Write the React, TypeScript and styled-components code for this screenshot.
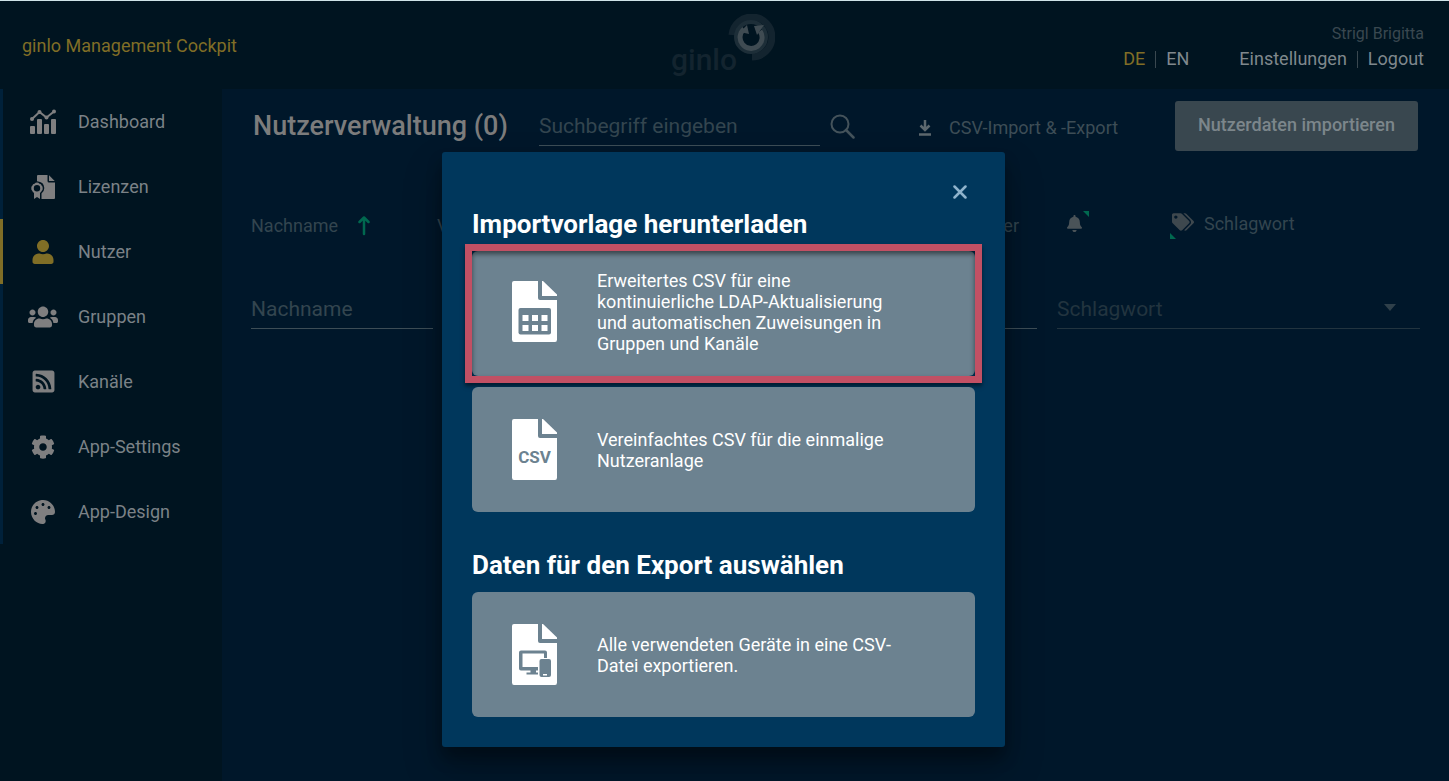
import React from "react";
import styled, { createGlobalStyle, css } from "styled-components";
import { FaUser, FaUsers, FaRssSquare, FaCog, FaPalette, FaBell, FaTags } from "react-icons/fa";

const color = {
  frame: "#001420",
  main: "#00172a",
  rail: "#00213a",
  gold: "#806e26",
  navText: "#7b8287",
  icon: "#7f7f80",
  title: "#7c7c7c",
  muted: "#33454f",
  line: "#3d4d56",
  green: "#00684f",
  modal: "#00375c",
  card: "#6c8290",
  mark: "#c25064",
};

const Global = createGlobalStyle`
  * { box-sizing: border-box; }
  body {
    margin: 0;
    background: ${color.main};
    font-family: Roboto, "Liberation Sans", sans-serif;
    font-size: 18px;
    line-height: 22px;
  }
  button, input, select { font: inherit; color: inherit; }
`;

const Page = styled.div`
  min-height: 100vh;
  display: flex;
  flex-direction: column;
  background: ${color.frame};
`;

const Header = styled.header`
  display: grid;
  grid-template-columns: 1fr auto 1fr;
  height: 89px;
  padding: 0 25px 0 22px;
  border-top: 1px solid #cfe3e8;
`;

const Brand = styled.div`
  align-self: center;
  padding-top: 2px;
  color: ${color.gold};
`;

const Logo = styled.div`
  display: flex;
  align-items: flex-end;
  padding-bottom: 13px;
`;

const LogoName = styled.span`
  color: #13242f;
  font-size: 30px;
  font-weight: 500;
  line-height: 32px;
`;

const LogoMark = styled.svg`
  width: 48px;
  height: 48px;
  margin: 0 0 14px -10px;
`;

const Account = styled.div`
  display: flex;
  flex-direction: column;
  align-items: flex-end;
  padding-top: 22px;
`;

const UserName = styled.div`
  color: #3a4850;
  font-size: 16px;
`;

const AccountRow = styled.div`
  display: flex;
  gap: 50px;
  padding-top: 3px;
`;

const LinkPair = styled.nav`
  display: flex;
  align-items: center;
  gap: 10px;
`;

const HeaderLink = styled.a<{ $active?: boolean }>`
  color: ${(p) => (p.$active ? color.gold : "#7f888d")};
  text-decoration: none;
`;

const Divider = styled.span`
  width: 1px;
  height: 17px;
  background: #3a4850;
`;

const Body = styled.div`
  flex: 1;
  display: flex;
`;

const Sidebar = styled.nav`
  flex: 0 0 222px;
`;

const NavItem = styled.a<{ $active?: boolean }>`
  display: grid;
  grid-template-columns: 30px 1fr;
  align-items: center;
  gap: 20px;
  height: 65px;
  padding-left: 25px;
  border-left: 3px solid ${(p) => (p.$active ? color.gold : color.rail)};
  color: ${color.navText};
  text-decoration: none;

  svg {
    justify-self: center;
    color: ${(p) => (p.$active ? color.gold : color.icon)};
  }
`;

const Main = styled.main`
  flex: 1;
  min-width: 0;
  padding: 12px 29px 0;
  background: ${color.main};
  color: ${color.muted};
`;

const Toolbar = styled.div`
  display: flex;
  align-items: center;
  height: 50px;
  padding: 0 2px;
`;

const PageTitle = styled.h1`
  margin: 0;
  width: 286px;
  color: ${color.title};
  font-size: 27px;
  font-weight: 500;
  line-height: 32px;
`;

const fieldStyle = css`
  width: 100%;
  height: 40px;
  padding: 0;
  border: 0;
  border-bottom: 1px solid ${color.line};
  border-radius: 0;
  outline: 0;
  background: transparent;
  color: ${color.muted};
  font-size: 21px;

  &::placeholder {
    color: inherit;
    opacity: 1;
  }
`;

const SearchForm = styled.form`
  display: flex;
  align-items: center;
  gap: 10px;
`;

const SearchInput = styled.input`
  ${fieldStyle}
  width: 281px;
`;

const IconButton = styled.button`
  display: grid;
  place-items: center;
  padding: 0;
  border: 0;
  background: transparent;
  cursor: pointer;
`;

const CsvButton = styled(IconButton)`
  grid-template-columns: 16px auto;
  gap: 16px;
  margin-left: 62px;
  padding-top: 4px;
  color: #3d4d56;
`;

const ImportButton = styled.button`
  width: 243px;
  height: 50px;
  margin-left: auto;
  padding: 0 0 2px;
  border: 0;
  border-radius: 3px;
  background: #39474f;
  color: #7c868b;
  font-weight: 500;
  cursor: pointer;
`;

const ColumnRow = styled.div`
  display: grid;
  grid-template-columns: 186fr 629fr 102fr 252fr;
  align-items: center;
  height: 28px;
  margin-top: 60px;
`;

const Column = styled.div`
  display: flex;
  align-items: center;
  gap: 20px;
`;

const WideColumn = styled(Column)`
  justify-content: space-between;
  padding-right: 47px;
`;

const Flag = styled.span<{ $corner: "top" | "bottom" }>`
  position: relative;
  display: flex;
  padding-bottom: 4px;

  &::after {
    content: "";
    position: absolute;
    width: 6px;
    height: 6px;
    background: ${color.green};
    ${(p) =>
      p.$corner === "top"
        ? "top: -4px; right: -6px; clip-path: polygon(0 0, 100% 0, 100% 100%);"
        : "bottom: -2px; left: -2px; clip-path: polygon(0 0, 100% 100%, 0 100%);"}
  }
`;

const TagColumn = styled(Column)`
  gap: 10px;
  padding: 0 0 3px 4px;
`;

const Filters = styled.form`
  display: grid;
  grid-template-columns: repeat(4, 1fr) 2fr;
  gap: 20px;
  padding-top: 50px;
`;

const FilterInput = styled.input`
  ${fieldStyle}
`;

const SelectBox = styled.div`
  position: relative;
  color: #2f404a;
`;

const FilterSelect = styled.select`
  ${fieldStyle}
  appearance: none;
  border-color: #22343f;
  color: #22343f;
`;

const Caret = styled.svg`
  position: absolute;
  right: 24px;
  top: 15px;
  pointer-events: none;
`;

const Overlay = styled.div`
  position: absolute;
  inset: 0;
  display: flex;
  justify-content: center;
  align-items: flex-start;
  padding: 152px 22px 34px 20px;
`;

const Modal = styled.section`
  width: 563px;
  padding: 30px;
  border-radius: 3px;
  background: ${color.modal};
  color: #ffffff;
  box-shadow: 0 11px 15px rgba(0, 0, 0, 0.3), 0 20px 38px rgba(0, 0, 0, 0.25);
`;

const ModalTop = styled.div`
  display: flex;
  justify-content: flex-end;
  height: 26px;
  padding-right: 4px;
`;

const CloseButton = styled(IconButton)`
  width: 22px;
  height: 20px;
  color: #8fb3cc;
`;

const ModalTitle = styled.h2`
  margin: 0;
  font-size: 26px;
  font-weight: 700;
  line-height: 32px;
`;

const CardList = styled.div`
  display: grid;
  gap: 11px;
  padding-top: 11px;

  & + ${ModalTitle} {
    margin-top: 37px;
  }
`;

const Card = styled.button<{ $marked?: boolean }>`
  position: relative;
  display: grid;
  grid-template-columns: 45px 1fr;
  align-items: center;
  gap: 40px;
  height: 125px;
  padding: 0 72px 0 40px;
  border: 0;
  border-radius: 6px;
  background: ${color.card};
  color: #ffffff;
  line-height: 21px;
  text-align: left;
  cursor: pointer;

  ${(p) =>
    p.$marked &&
    css`
      padding-bottom: 4px;

      &::after {
        content: "";
        position: absolute;
        inset: -7px;
        border: 7px solid ${color.mark};
        box-shadow: 0 3px 4px rgba(0, 0, 0, 0.5), inset 0 3px 5px rgba(0, 0, 0, 0.5);
      }
    `}
`;

const DashboardIcon = () => (
  <svg width="28" height="26" viewBox="0 0 28 26" fill="currentColor" aria-hidden="true">
    <rect x="1" y="17" width="5" height="8" rx="1" />
    <rect x="8" y="10" width="5" height="15" rx="1" />
    <rect x="15" y="15" width="5" height="10" rx="1" />
    <rect x="22" y="10" width="5" height="15" rx="1" />
    <path d="M3 10 L10.500 3 L17.500 8.500 L25 2.500" fill="none" stroke="currentColor" strokeWidth="2" />
    <circle cx="3" cy="10" r="2" />
    <circle cx="10.500" cy="3" r="2" />
    <circle cx="17.500" cy="8.500" r="2" />
    <circle cx="25" cy="2.500" r="2" />
  </svg>
);

const LicenceIcon = () => (
  <svg width="24" height="24" viewBox="0 0 24 24" fill="currentColor" aria-hidden="true">
    <path d="M6 1 Q6 0 7 0 H16.500 V6 Q16.500 7.500 18 7.500 H24 V23 Q24 24 23 24 H10.500 V18.500 Q13.300 16.500 13.300 13 Q13.300 7 6 6.200 Z" />
    <path d="M18 0.300 L23.700 6 H18 Z" />
    <path
      fillRule="evenodd"
      d="M6 7.500 Q7.500 7.500 8.500 8.700 Q10.200 8.900 10.600 10.500 Q12 11.500 11.700 13.200 Q12 15 10.600 15.900 Q10.200 17.400 9 17.700 V24 L6 22 L3 24 V17.700 Q1.700 17.300 1.400 15.900 Q0 14.800 0.300 13.200 Q0 11.500 1.400 10.500 Q1.800 8.900 3.500 8.700 Q4.500 7.500 6 7.500 Z M6 10 A3.200 3.200 0 1 0 6 16.400 A3.200 3.200 0 1 0 6 10 Z"
    />
  </svg>
);

const SearchIcon = () => (
  <svg width="25" height="25" viewBox="0 0 25 25" fill="none" stroke="#44535b" strokeWidth="2" aria-hidden="true">
    <circle cx="10" cy="10" r="8.500" />
    <path d="M16 16 L23.500 23.500" strokeWidth="2.500" strokeLinecap="round" />
  </svg>
);

const DownloadIcon = () => (
  <svg width="14" height="16" viewBox="0 0 14 16" fill="none" stroke="#5d686e" strokeWidth="2.500" aria-hidden="true">
    <path d="M7 0 V10 M2.500 5.500 L7 10 L11.500 5.500 M1 14.500 H13" />
  </svg>
);

const ArrowUpIcon = () => (
  <svg width="12" height="20" viewBox="0 0 12 20" fill="none" stroke={color.green} strokeWidth="2.500" strokeLinecap="round" strokeLinejoin="round" aria-hidden="true">
    <path d="M6 18 V2 M1.500 6 L6 1.500 L10.500 6" />
  </svg>
);

const CloseIcon = () => (
  <svg width="14" height="14" viewBox="0 0 14 14" stroke="currentColor" strokeWidth="2.500" strokeLinecap="round" aria-hidden="true">
    <path d="M1.500 1.500 L12.500 12.500 M12.500 1.500 L1.500 12.500" />
  </svg>
);

const FileIcon = ({ children }: { children: React.ReactNode }) => (
  <svg width="45" height="61" viewBox="0 0 45 61" fill="#ffffff" aria-hidden="true">
    <path d="M2 0 H26 V17 Q26 19 28 19 H45 V58.500 Q45 61 43 61 H2 Q0 61 0 58.500 V2 Q0 0 2 0 Z" />
    <path d="M30 0 H31 L45 13.500 V15 H30 Z" />
    {children}
  </svg>
);

const TableFileIcon = () => (
  <FileIcon>
    <rect x="6.500" y="27" width="32.500" height="26.500" rx="2" fill={color.card} />
    {[34, 44].map((y) => [10.5, 20, 29.5].map((x) => <rect key={`${x}-${y}`} x={x} y={y} width="6" height="6" />))}
  </FileIcon>
);

const CsvFileIcon = () => (
  <FileIcon>
    <text x="22.500" y="44" textAnchor="middle" fontSize="17" fontWeight="700" fill={color.card}>
      CSV
    </text>
  </FileIcon>
);

const DeviceFileIcon = () => (
  <FileIcon>
    <path
      fill={color.card}
      fillRule="evenodd"
      d="M9 26.500 H33 Q35 26.500 35 28.500 V34 H32 V29.500 H10.500 V43 H26 V46.500 H24 V48.500 H26 V50.500 H14.500 V48.500 H18.500 V46.500 H9 Q7 46.500 7 44.500 V28.500 Q7 26.500 9 26.500 Z"
    />
    <rect x="27.500" y="35" width="11.500" height="18" rx="2" fill={color.card} />
    <rect x="31" y="50" width="4" height="1.500" />
  </FileIcon>
);

const navigation = [
  { label: "Dashboard", icon: <DashboardIcon /> },
  { label: "Lizenzen", icon: <LicenceIcon /> },
  { label: "Nutzer", icon: <FaUser size={24} />, active: true },
  { label: "Gruppen", icon: <FaUsers size={30} /> },
  { label: "Kanäle", icon: <FaRssSquare size={25} /> },
  { label: "App-Settings", icon: <FaCog size={24} /> },
  { label: "App-Design", icon: <FaPalette size={24} /> },
];

export default function App() {
  return (
    <Page>
      <Global />
      <Header>
        <Brand>ginlo Management Cockpit</Brand>
        <Logo>
          <LogoName>ginlo</LogoName>
          <LogoMark viewBox="0 0 48 48" fill="none" aria-hidden="true">
            <path d="M5 21 A20 20 0 1 1 25 43" stroke="#13242f" strokeWidth="7" />
            <circle cx="24" cy="23" r="15" stroke="#1d2e38" strokeWidth="4" />
            <path d="M17 15 A11 11 0 1 0 33 17" stroke="#3f4b52" strokeWidth="5" />
            <path d="M13 18 L20 11 L22 20 Z M27 12 L37 11 L30 21 Z" fill="#3f4b52" />
          </LogoMark>
        </Logo>
        <Account>
          <UserName>Strigl Brigitta</UserName>
          <AccountRow>
            <LinkPair aria-label="Sprache">
              <HeaderLink href="#de" $active>DE</HeaderLink>
              <Divider />
              <HeaderLink href="#en">EN</HeaderLink>
            </LinkPair>
            <LinkPair aria-label="Konto">
              <HeaderLink href="#einstellungen">Einstellungen</HeaderLink>
              <Divider />
              <HeaderLink href="#logout">Logout</HeaderLink>
            </LinkPair>
          </AccountRow>
        </Account>
      </Header>

      <Body>
        <Sidebar>
          {navigation.map((item) => (
            <NavItem key={item.label} href={`#${item.label}`} $active={item.active}>
              {item.icon}
              <span>{item.label}</span>
            </NavItem>
          ))}
        </Sidebar>

        <Main>
          <Toolbar>
            <PageTitle>Nutzerverwaltung (0)</PageTitle>
            <SearchForm>
              <SearchInput type="search" placeholder="Suchbegriff eingeben" aria-label="Suchbegriff" />
              <IconButton type="button" aria-label="Suchen">
                <SearchIcon />
              </IconButton>
            </SearchForm>
            <CsvButton type="button">
              <DownloadIcon />
              <span>CSV-Import &amp; -Export</span>
            </CsvButton>
            <ImportButton type="button">Nutzerdaten importieren</ImportButton>
          </Toolbar>

          <ColumnRow>
            <Column>
              <span>Nachname</span>
              <ArrowUpIcon />
            </Column>
            <WideColumn>
              <span>Vorname</span>
              <span>Telefonnummer</span>
            </WideColumn>
            <Column>
              <Flag $corner="top">
                <FaBell size={17} color="#4a5358" />
              </Flag>
            </Column>
            <TagColumn>
              <Flag $corner="bottom">
                <FaTags size={22} color="#3e484e" />
              </Flag>
              <span>Schlagwort</span>
            </TagColumn>
          </ColumnRow>

          <Filters>
            <FilterInput placeholder="Nachname" aria-label="Nachname" />
            <FilterInput aria-label="Vorname" />
            <FilterInput aria-label="E-Mail" />
            <FilterInput aria-label="Telefonnummer" />
            <SelectBox>
              <FilterSelect aria-label="Schlagwort">
                <option>Schlagwort</option>
              </FilterSelect>
              <Caret width="12" height="7" viewBox="0 0 12 7" fill="currentColor" aria-hidden="true">
                <path d="M0 0 H12 L6 7 Z" />
              </Caret>
            </SelectBox>
          </Filters>
        </Main>
      </Body>

      <Overlay>
        <Modal role="dialog" aria-labelledby="import-title">
          <ModalTop>
            <CloseButton type="button" aria-label="Schließen">
              <CloseIcon />
            </CloseButton>
          </ModalTop>
          <ModalTitle id="import-title">Importvorlage herunterladen</ModalTitle>
          <CardList>
            <Card type="button" $marked>
              <TableFileIcon />
              <span>
                Erweitertes CSV für eine kontinuierliche LDAP-Aktualisierung und automatischen Zuweisungen in Gruppen
                und Kanäle
              </span>
            </Card>
            <Card type="button">
              <CsvFileIcon />
              <span>Vereinfachtes CSV für die einmalige Nutzeranlage</span>
            </Card>
          </CardList>
          <ModalTitle>Daten für den Export auswählen</ModalTitle>
          <CardList>
            <Card type="button">
              <DeviceFileIcon />
              <span>Alle verwendeten Geräte in eine CSV-Datei exportieren.</span>
            </Card>
          </CardList>
        </Modal>
      </Overlay>
    </Page>
  );
}
